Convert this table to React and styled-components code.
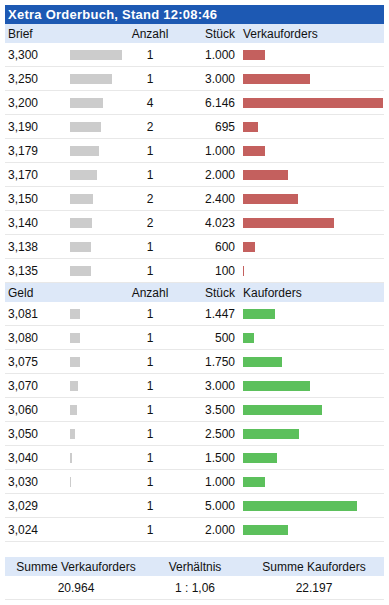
import React from 'react';
import styled, { createGlobalStyle } from 'styled-components';

const GlobalStyle = createGlobalStyle`
  body {
    margin: 5px;
    background: #fff;
    font-family: "Liberation Sans", Arial, sans-serif;
    font-size: 12px;
    color: #111;
  }
`;

const Book = styled.div`
  width: 380px;
`;

const Title = styled.div`
  height: 19px;
  line-height: 19px;
  padding-left: 3px;
  background: #1d59b3;
  color: #fff;
  font-weight: bold;
  font-size: 13px;
  letter-spacing: 0.25px;
`;

const Grid = styled.div`
  display: grid;
  grid-template-columns: 60px 60px 50px 63px 1fr;
  align-items: center;
`;

const HeadRow = styled(Grid)`
  height: 19px;
  background: #dde8f8;
`;

const Row = styled(Grid)`
  height: 23px;
  border-bottom: 1px solid #e8e8e8;
`;

const Price = styled.div`
  padding-left: 3px;
`;

const Count = styled.div`
  text-align: center;
`;

const Pieces = styled.div`
  text-align: right;
  padding-right: 3px;
`;

const BarCell = styled.div`
  padding-left: 5px;
  display: flex;
  align-items: center;
`;

const Bar = styled.div`
  height: 10px;
  background: ${props => props.color};
`;

const Summary = styled.div`
  margin-top: 15px;
`;

const SumGrid = styled.div`
  display: grid;
  grid-template-columns: 142px 96px 142px;
  align-items: center;
  text-align: center;
`;

const SumHead = styled(SumGrid)`
  height: 19px;
  background: #dde8f8;
`;

const SumRow = styled(SumGrid)`
  height: 23px;
  border-bottom: 1px solid #e8e8e8;
`;

const asks = [
  ['3,300', 52, 1, '1.000', 22],
  ['3,250', 42, 1, '3.000', 67],
  ['3,200', 33, 4, '6.146', 140],
  ['3,190', 31, 2, '695', 15],
  ['3,179', 29, 1, '1.000', 22],
  ['3,170', 27, 1, '2.000', 45],
  ['3,150', 23, 2, '2.400', 55],
  ['3,140', 22, 2, '4.023', 91],
  ['3,138', 21, 1, '600', 12],
  ['3,135', 21, 1, '100', 1],
];

const bids = [
  ['3,081', 10, 1, '1.447', 32],
  ['3,080', 10, 1, '500', 11],
  ['3,075', 10, 1, '1.750', 39],
  ['3,070', 8, 1, '3.000', 67],
  ['3,060', 7, 1, '3.500', 79],
  ['3,050', 5, 1, '2.500', 56],
  ['3,040', 2, 1, '1.500', 34],
  ['3,030', 1, 1, '1.000', 22],
  ['3,029', 0, 1, '5.000', 114],
  ['3,024', 0, 1, '2.000', 45],
];

function Side({ label, orders, rows, color }) {
  return (
    <>
      <HeadRow>
        <Price>{label}</Price>
        <div />
        <Count>Anzahl</Count>
        <Pieces>Stück</Pieces>
        <BarCell>{orders}</BarCell>
      </HeadRow>
      {rows.map(([price, dist, count, pieces, width]) => (
        <Row key={price}>
          <Price>{price}</Price>
          <BarCell>
            {dist > 0 && <Bar color="#cccccc" style={{ width: dist }} />}
          </BarCell>
          <Count>{count}</Count>
          <Pieces>{pieces}</Pieces>
          <BarCell>
            <Bar color={color} style={{ width }} />
          </BarCell>
        </Row>
      ))}
    </>
  );
}

export default function App() {
  return (
    <Book>
      <GlobalStyle />
      <Title>Xetra Orderbuch, Stand 12:08:46</Title>
      <Side label="Brief" orders="Verkauforders" rows={asks} color="#c4605e" />
      <Side label="Geld" orders="Kauforders" rows={bids} color="#5cc05c" />
      <Summary>
        <SumHead>
          <div>Summe Verkauforders</div>
          <div>Verhältnis</div>
          <div>Summe Kauforders</div>
        </SumHead>
        <SumRow>
          <div>20.964</div>
          <div>1 : 1,06</div>
          <div>22.197</div>
        </SumRow>
      </Summary>
    </Book>
  );
}
